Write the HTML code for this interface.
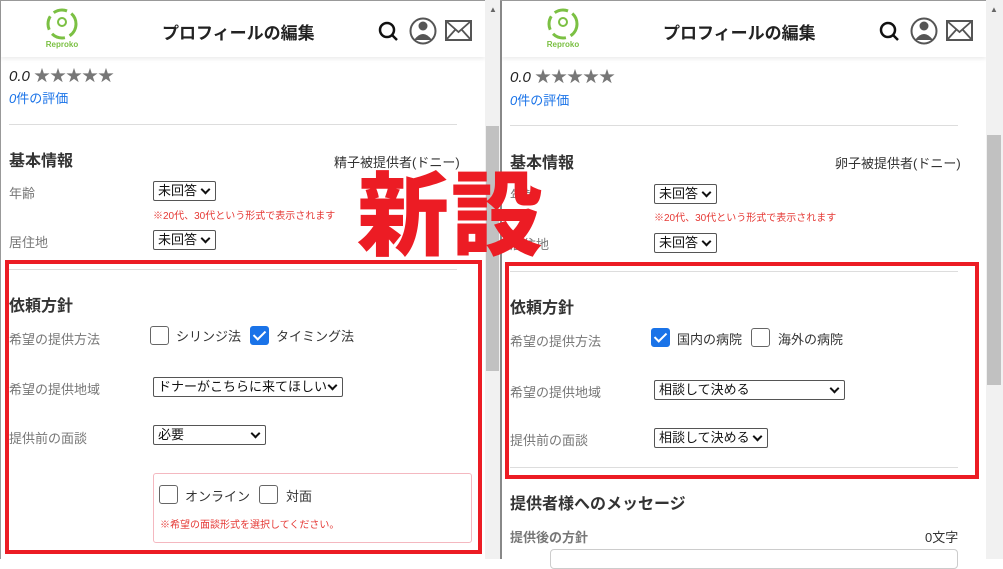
<!DOCTYPE html>
<html><head><meta charset="utf-8"><style>
*{margin:0;padding:0;box-sizing:border-box}
body{width:1003px;height:559px;overflow:hidden;background:#fff;font-family:"Liberation Sans","Noto Sans CJK JP",sans-serif;position:relative;color:#333}
.a{position:absolute;white-space:nowrap}
.hdr{position:absolute;top:0;height:57px;background:#fff;box-shadow:0 2px 4px rgba(0,0,0,.08)}
.title{font-size:17px;font-weight:bold;color:#222}
.lbl{font-size:13px;color:#777;transform:translateY(-2px)}
.h{font-size:16px;font-weight:bold;color:#333;transform:translateY(-3px)}
.sel{position:absolute;height:20px;border:1px solid #555;border-radius:2px;font-size:13px;color:#111;padding-left:4px;line-height:18px;background:#fff;overflow:hidden}
.sel:after{content:"";position:absolute;right:6px;top:4px;width:5px;height:5px;border-right:2px solid #111;border-bottom:2px solid #111;transform:rotate(45deg);background:#fff}
.cb{position:absolute;width:19px;height:19px;border:1.5px solid #666;border-radius:3px;background:#fff}
.cb.on{background:#1a73e8;border-color:#1a73e8}
.cb.on:after{content:"";position:absolute;left:5px;top:1px;width:5px;height:10px;border-right:2.5px solid #fff;border-bottom:2.5px solid #fff;transform:rotate(45deg)}
.t{font-size:13px;color:#333;transform:translateY(-2px)}
.note{font-size:10px;color:#e53935}
.line{position:absolute;height:1px;background:#ddd}
.red{position:absolute;border:4px solid #ec1c24}
.sb{position:absolute;background:#f1f1f1}
.thumb{position:absolute;background:#c1c1c1}
</style></head><body>
<div class="a" style="left:0;top:0;width:1px;height:559px;background:#999"></div>
<div class="hdr" style="left:1px;width:484px"></div>
<div class="hdr" style="left:502px;width:484px"></div>
<div class="a" style="left:500px;top:0;width:2px;height:559px;background:#888"></div>
<div class="a" style="left:0;top:0;width:1003px;height:1px;background:#999"></div>
<div class="sb" style="left:485px;top:0;width:15px;height:559px"></div>
<div class="thumb" style="left:486px;top:126px;width:13px;height:245px"></div>
<div class="sb" style="left:986px;top:0;width:17px;height:559px"></div>
<div class="thumb" style="left:987px;top:135px;width:14px;height:250px"></div>
<div class="a" style="left:489px;top:5px;font-size:8px;color:#666">▲</div>
<div class="a" style="left:990px;top:5px;font-size:8px;color:#666">▲</div>

<svg class="a" style="left:0;top:0" width="1003" height="60">
<g id="hd">
<circle cx="62" cy="24" r="14" fill="none" stroke="#7bc043" stroke-width="3" stroke-dasharray="14 5"/>
<circle cx="62" cy="22" r="4" fill="none" stroke="#7bc043" stroke-width="2"/>
<text x="62" y="47" font-size="8" font-weight="bold" fill="#7bc043" text-anchor="middle" font-family="Liberation Sans">Reproko</text>
<circle cx="387" cy="30" r="7" fill="none" stroke="#111" stroke-width="2.5"/>
<line x1="392" y1="35" x2="397" y2="40" stroke="#111" stroke-width="2.5"/>
<circle cx="423" cy="31" r="12.5" fill="#fff" stroke="#555" stroke-width="2"/>
<circle cx="423" cy="26" r="4.5" fill="#555"/>
<path d="M414 40 Q423 28 432 40 Z" fill="#555"/>
<rect x="446" y="21" width="25" height="19" fill="none" stroke="#555" stroke-width="2"/>
<path d="M446 21 L458.5 32 L471 21 M446 40 L455 30 M471 40 L462 30" fill="none" stroke="#555" stroke-width="1.8"/>
</g>
<use href="#hd" x="501"/>
</svg>
<div class="a title" style="left:162px;top:19px">プロフィールの編集</div>
<div class="a title" style="left:663px;top:19px">プロフィールの編集</div>

<div class="a" style="left:9px;top:62px;font-size:15px;font-style:italic;color:#222">0.0 <span style="font-style:normal;color:#777;font-size:16px">★★★★★</span></div>
<div class="a" style="left:9px;top:88px;font-size:13px;color:#1a73e8;font-style:italic">0<span style="font-style:normal">件の評価</span></div>
<div class="line" style="left:9px;top:124px;width:448px"></div>
<div class="a h" style="left:9px;top:150px">基本情報</div>
<div class="a t" style="left:334px;top:154px">精子被提供者(ドニー)</div>
<div class="a lbl" style="left:9px;top:185px">年齢</div>
<div class="sel" style="left:153px;top:181px;width:63px">未回答</div>
<div class="a note" style="left:153px;top:207px">※20代、30代という形式で表示されます</div>
<div class="a lbl" style="left:9px;top:234px">居住地</div>
<div class="sel" style="left:153px;top:230px;width:63px">未回答</div>
<div class="line" style="left:9px;top:269px;width:448px"></div>
<div class="a h" style="left:9px;top:295px">依頼方針</div>
<div class="a lbl" style="left:9px;top:331px">希望の提供方法</div>
<div class="cb" style="left:150px;top:326px"></div>
<div class="a t" style="left:176px;top:328px">シリンジ法</div>
<div class="cb on" style="left:250px;top:326px"></div>
<div class="a t" style="left:276px;top:328px">タイミング法</div>
<div class="a lbl" style="left:9px;top:381px">希望の提供地域</div>
<div class="sel" style="left:153px;top:377px;width:190px">ドナーがこちらに来てほしい</div>
<div class="a lbl" style="left:9px;top:430px">提供前の面談</div>
<div class="sel" style="left:153px;top:425px;width:113px">必要</div>
<div class="a" style="left:153px;top:473px;width:319px;height:70px;border:1px solid #f4b8c0;border-radius:3px"></div>
<div class="cb" style="left:159px;top:485px"></div>
<div class="a t" style="left:185px;top:488px">オンライン</div>
<div class="cb" style="left:259px;top:485px"></div>
<div class="a t" style="left:286px;top:488px">対面</div>
<div class="a note" style="left:160px;top:516px">※希望の面談形式を選択してください。</div>
<div class="red" style="left:5px;top:260px;width:477px;height:294px"></div>

<div class="a" style="left:510px;top:63px;font-size:15px;font-style:italic;color:#222">0.0 <span style="font-style:normal;color:#777;font-size:16px">★★★★★</span></div>
<div class="a" style="left:510px;top:90px;font-size:13px;color:#1a73e8;font-style:italic">0<span style="font-style:normal">件の評価</span></div>
<div class="line" style="left:510px;top:125px;width:448px"></div>
<div class="a h" style="left:510px;top:152px">基本情報</div>
<div class="a t" style="left:835px;top:155px">卵子被提供者(ドニー)</div>
<div class="a lbl" style="left:510px;top:187px">年齢</div>
<div class="sel" style="left:654px;top:184px;width:63px">未回答</div>
<div class="a note" style="left:654px;top:209px">※20代、30代という形式で表示されます</div>
<div class="a lbl" style="left:510px;top:236px">居住地</div>
<div class="sel" style="left:654px;top:233px;width:63px">未回答</div>
<div class="line" style="left:510px;top:271px;width:448px"></div>
<div class="a h" style="left:510px;top:297px">依頼方針</div>
<div class="a lbl" style="left:510px;top:333px">希望の提供方法</div>
<div class="cb on" style="left:651px;top:328px"></div>
<div class="a t" style="left:677px;top:331px">国内の病院</div>
<div class="cb" style="left:751px;top:328px"></div>
<div class="a t" style="left:778px;top:331px">海外の病院</div>
<div class="a lbl" style="left:510px;top:384px">希望の提供地域</div>
<div class="sel" style="left:654px;top:380px;width:191px">相談して決める</div>
<div class="a lbl" style="left:510px;top:432px">提供前の面談</div>
<div class="sel" style="left:654px;top:428px;width:114px">相談して決める</div>
<div class="line" style="left:510px;top:467px;width:448px"></div>
<div class="red" style="left:505px;top:262px;width:474px;height:217px"></div>
<div class="a h" style="left:510px;top:493px">提供者様へのメッセージ</div>
<div class="a lbl" style="left:510px;top:529px;font-weight:bold">提供後の方針</div>
<div class="a t" style="left:925px;top:529px">0文字</div>
<div class="a" style="left:550px;top:549px;width:408px;height:20px;border:1px solid #ccc;border-radius:4px"></div>

<div class="a" style="left:357px;top:163px;font-size:92px;font-weight:900;color:#ec1c24;font-family:'Noto Sans CJK JP',sans-serif;line-height:1;letter-spacing:2px">新設</div>
</body></html>
